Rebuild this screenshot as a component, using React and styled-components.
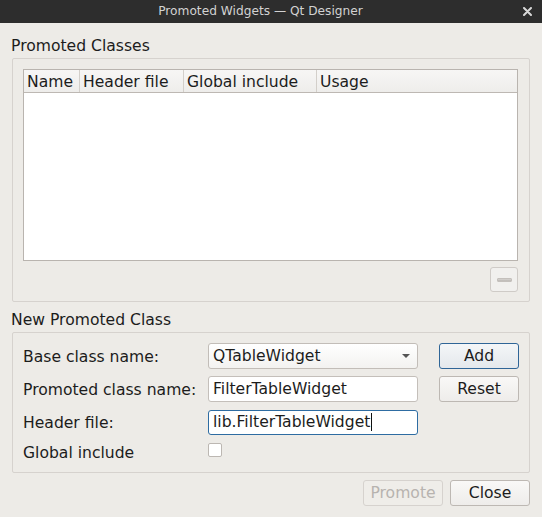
import React from "react";
import styled, { createGlobalStyle, css } from "styled-components";

const Global = createGlobalStyle`
  html, body { margin: 0; padding: 0; background: #edebe7; }
  body { font-family: "DejaVu Sans", "Noto Sans", sans-serif; color: #1c1c1c; }
  * { box-sizing: border-box; }
`;

const FS = "15.6px";

const Window = styled.div`
  width: 542px;
  height: 517px;
  display: flex;
  flex-direction: column;
  background: #edebe7;
  overflow: hidden;
`;

const TitleBar = styled.div`
  height: 23px;
  flex: none;
  background: #2d2d2d;
  color: #d2d2d2;
  font-size: 12.2px;
  display: grid;
  grid-template-columns: 1fr auto 1fr;
  align-items: center;
`;

const TitleText = styled.div`
  grid-column: 2;
  line-height: 23px;
  margin-right: 21px;
`;

const CloseBox = styled.div`
  grid-column: 3;
  justify-self: end;
  padding-right: 10px;
  display: flex;
  align-items: center;
`;

const Body = styled.div`
  flex: 1;
  display: flex;
  flex-direction: column;
  padding: 14px 12px 0 12px;
`;

const SectionLabel = styled.div`
  font-size: ${FS};
  line-height: 18px;
  margin-left: -1px;
  margin-top: ${(p) => p.$top || 0}px;
`;

const Frame = styled.div`
  margin-top: 3px;
  border: 1px solid #d6d2ce;
  border-radius: 2px;
`;

const ClassesFrame = styled(Frame)`
  height: 244px;
  padding: 10px 11px 0 10px;
  display: flex;
  flex-direction: column;
`;

const Table = styled.div`
  height: 192px;
  background: #ffffff;
  border: 1px solid #b9b4af;
  display: flex;
  flex-direction: column;
`;

const HeaderRow = styled.div`
  display: flex;
  height: 23px;
  background: linear-gradient(#f7f6f5, #eeedeb);
  border-bottom: 1px solid #bdb8b3;
`;

const HeaderCell = styled.div`
  flex: ${(p) => (p.$w ? `0 0 ${p.$w}px` : "1")};
  font-size: ${FS};
  line-height: 22px;
  padding: 1px 0 0 3px;
  border-right: ${(p) => (p.$last ? "none" : "1px solid #d3cfca")};
  white-space: nowrap;
  overflow: hidden;
`;

const ToolRow = styled.div`
  display: flex;
  justify-content: flex-end;
  margin-top: 6px;
`;

const ToolButton = styled.div`
  width: 28px;
  height: 25px;
  border: 1px solid #cfcbc7;
  border-radius: 3px;
  background: #f1f0ee;
  display: flex;
  align-items: center;
  justify-content: center;
`;

const MinusBar = styled.div`
  width: 15px;
  height: 4px;
  border-radius: 1px;
  background: linear-gradient(#d7d4d1, #bcb8b4);
  border: 1px solid #c4c0bc;
`;

const FormFrame = styled(Frame)`
  height: 141px;
  padding: 10px 10px 0 10px;
  display: grid;
  grid-template-columns: 185px 210px 1fr;
  grid-template-rows: 26px 26px 26px 20px;
  row-gap: 7px;
  align-items: center;
`;

const FieldLabel = styled.div`
  font-size: ${FS};
  line-height: 18px;
  padding-top: 1px;
  white-space: nowrap;
`;

const inputBase = css`
  height: 26px;
  border-radius: 3px;
  font-size: ${FS};
  line-height: 24px;
  padding-left: 4px;
  white-space: nowrap;
`;

const Combo = styled.div`
  ${inputBase}
  border: 1px solid #c2bdb8;
  background: linear-gradient(#ffffff, #f3f2f0);
  display: flex;
  align-items: center;
  justify-content: space-between;
  padding-right: 7px;
`;

const Arrow = styled.div`
  width: 0;
  height: 0;
  border-left: 4px solid transparent;
  border-right: 4px solid transparent;
  border-top: 4px solid #555;
`;

const LineEdit = styled.div`
  ${inputBase}
  background: #ffffff;
  border: 1px solid ${(p) => (p.$focus ? "#2e6ca2" : "#c4bfba")};
  display: flex;
  align-items: center;
  height: ${(p) => (p.$h ? p.$h : 26)}px;
`;

const Caret = styled.span`
  display: inline-block;
  width: 1px;
  height: 18px;
  background: #111;
  margin-left: 1px;
`;

const ButtonCell = styled.div`
  grid-column: 3;
  justify-self: end;
`;

const Button = styled.div`
  width: 80px;
  height: 26px;
  border-radius: 3px;
  font-size: ${FS};
  line-height: 24px;
  text-align: center;
  border: 1px solid ${(p) => (p.$default ? "#2f6597" : p.$disabled ? "#d6d2ce" : "#bdb8b3")};
  background: ${(p) =>
    p.$default
      ? "linear-gradient(#f4f6f8, #e4e8ec)"
      : p.$disabled
      ? "#efede9"
      : "linear-gradient(#f9f8f7, #eeecea)"};
  color: ${(p) => (p.$disabled ? "#b7b3af" : "#1c1c1c")};
`;

const CheckBox = styled.div`
  width: 14px;
  height: 14px;
  background: #ffffff;
  border: 1px solid #bcb7b2;
  border-radius: 2px;
  align-self: start;
  margin-top: 1px;
`;

const Footer = styled.div`
  display: flex;
  justify-content: flex-end;
  gap: 7px;
  margin-top: 7px;
`;

function CloseIcon() {
  return (
    <svg width="9" height="9" viewBox="0 0 9 9">
      <path d="M1 1 L8 8 M8 1 L1 8" stroke="#d8d8d8" strokeWidth="2" strokeLinecap="round" />
    </svg>
  );
}

export default function App() {
  return (
    <>
      <Global />
      <Window>
        <TitleBar>
          <TitleText>Promoted Widgets — Qt Designer</TitleText>
          <CloseBox>
            <CloseIcon />
          </CloseBox>
        </TitleBar>
        <Body>
          <SectionLabel>Promoted Classes</SectionLabel>
          <ClassesFrame>
            <Table>
              <HeaderRow>
                <HeaderCell $w={56}>Name</HeaderCell>
                <HeaderCell $w={104}>Header file</HeaderCell>
                <HeaderCell $w={133}>Global include</HeaderCell>
                <HeaderCell $last>Usage</HeaderCell>
              </HeaderRow>
            </Table>
            <ToolRow>
              <ToolButton>
                <MinusBar />
              </ToolButton>
            </ToolRow>
          </ClassesFrame>

          <SectionLabel $top={9}>New Promoted Class</SectionLabel>
          <FormFrame>
            <FieldLabel>Base class name:</FieldLabel>
            <Combo>
              <span>QTableWidget</span>
              <Arrow />
            </Combo>
            <ButtonCell>
              <Button $default>Add</Button>
            </ButtonCell>

            <FieldLabel>Promoted class name:</FieldLabel>
            <LineEdit>FilterTableWidget</LineEdit>
            <ButtonCell>
              <Button>Reset</Button>
            </ButtonCell>

            <FieldLabel>Header file:</FieldLabel>
            <LineEdit $focus $h={25}>
              lib.FilterTableWidget
              <Caret />
            </LineEdit>
            <div />

            <FieldLabel>Global include</FieldLabel>
            <CheckBox />
            <div />
          </FormFrame>

          <Footer>
            <Button $disabled>Promote</Button>
            <Button>Close</Button>
          </Footer>
        </Body>
      </Window>
    </>
  );
}
